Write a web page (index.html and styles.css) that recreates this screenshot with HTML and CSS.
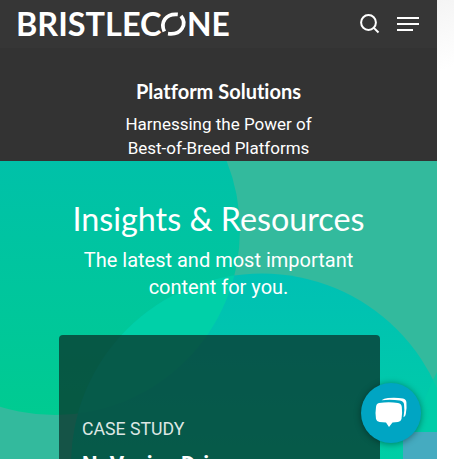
FILE: index.html
```
<!DOCTYPE html>
<html lang="en">
<head>
<meta charset="utf-8">
<title>Bristlecone</title>
<link rel="stylesheet" href="styles.css">
</head>
<body>
<div class="page">
  <header class="header">
    <svg class="logo" width="216" height="28" viewBox="0 0 216 28" role="img" aria-label="Bristlecone">
      <g class="logo-text">
        <text x="0" y="25.500" textLength="145.500" lengthAdjust="spacingAndGlyphs">BRISTLEC</text>
        <text x="171" y="25.500" textLength="42.800" lengthAdjust="spacingAndGlyphs">NE</text>
      </g>
      <g fill="none" stroke="#fff" stroke-width="3.700">
        <path d="M148.300 21.500C144.300 12.500 149.500 3.200 161.800 4.400"/>
        <path d="M165 6C171.500 14 165.500 25.500 152 23.700"/>
      </g>
    </svg>
    <div class="actions">
      <svg width="20" height="20" viewBox="0 0 20 20" fill="none" stroke="#fff" stroke-width="2"><circle cx="8.500" cy="8.500" r="7.400"/><path d="M13.600 13.600L18.500 18.500"/></svg>
      <svg width="22" height="16" viewBox="0 0 22 16" fill="#fff"><path d="M0 1h22v2H0zM0 7h22v2H0zM0 13h16v2H0z"/></svg>
    </div>
  </header>
  <section class="platform">
    <h2>Platform Solutions</h2>
    <p>Harnessing the Power of<br>Best-of-Breed Platforms</p>
  </section>
  <section class="insights">
    <svg class="backdrop" width="437" height="298" viewBox="0 161 437 298" aria-hidden="true">
      <defs>
        <linearGradient id="a" gradientUnits="userSpaceOnUse" x1="0" y1="161" x2="0" y2="415"><stop stop-color="#00c1a9"/><stop offset="1" stop-color="#00cb91"/></linearGradient>
        <linearGradient id="b" gradientUnits="userSpaceOnUse" x1="0" y1="273" x2="0" y2="459"><stop stop-color="#00c0b4"/><stop offset="1" stop-color="#00cea5"/></linearGradient>
        <clipPath id="c"><circle cx="55" cy="230" r="185"/></clipPath>
      </defs>
      <circle cx="55" cy="230" r="185" fill="url(#a)"/>
      <circle cx="262" cy="464.500" r="191" fill="url(#b)"/>
      <circle cx="262" cy="464.500" r="191" fill="#00d0a8" clip-path="url(#c)"/>
      <circle cx="602" cy="460" r="187" fill="#00cda8" fill-opacity=".7"/>
      <path d="M403 432h34v27h-34z" fill="#45abc0"/>
    </svg>
    <h1>Insights &amp; Resources</h1>
    <p>The latest and most important<br>content for you.</p>
    <article class="card">
      <span>CASE STUDY</span>
      <h3>NuVasive Drives</h3>
    </article>
  </section>
</div>
<div class="gutter"></div>
<button class="chat" aria-label="Chat">
  <svg width="34" height="32" viewBox="0 0 34 32" fill="#fff"><path d="M5 6Q15 4.500 24 6Q27.500 6.500 27.800 10Q28.600 16 27.500 22Q27 24.500 24 25L18.500 25.600L15 30L12 25.600L5.500 25Q2.500 24.500 2 22Q1 16 2 10Q2.300 6.500 5 6Z"/><path d="M7.500 3.200Q10 1.200 14 1Q22 .4 29 1.400Q32 2 32.400 5Q33 11 31.800 17Q31.500 19.500 29.500 20.300Q31 13 30 7Q29.500 4 26 3.500Q17 2.200 7.500 3.200Z"/></svg>
</button>
</body>
</html>
```
FILE: styles.css
```
* { box-sizing: border-box; }
body {
  margin: 0;
  height: 459px;
  display: flex;
  overflow: hidden;
  background: #fff;
  color: #fff;
  font-family: Roboto, sans-serif;
}
h1, h2, h3, p { margin: 0; }
svg { display: block; }
.page { width: 437px; height: 459px; overflow: hidden; }
.gutter {
  flex: 1;
  height: 90px;
  background: linear-gradient(155deg, #f4f4f4, #fff 75%);
}
.header {
  height: 48px;
  padding: 0 18px 0 16px;
  display: flex;
  align-items: center;
  justify-content: space-between;
  background: #363636;
}
.logo { overflow: visible; }
.logo-text { font: 700 32px Lato, sans-serif; fill: #fff; }
.actions { display: flex; align-items: center; gap: 17px; }
.platform {
  height: 113px;
  padding-top: 30px;
  background: #333;
  text-align: center;
}
.platform h2 {
  font: 700 20px/26px Lato, sans-serif;
  font-variant-ligatures: none;
}
.platform p { margin-top: 8px; font-size: 17px; line-height: 24px; }
.insights {
  position: relative;
  height: 298px;
  padding-top: 37px;
  overflow: hidden;
  background: #33ba9d;
  text-align: center;
}
.backdrop { position: absolute; inset: 0; }
.insights h1, .insights p, .card { position: relative; }
.insights h1 { font: 400 32.3px/42px Lato, sans-serif; }
.insights p { margin-top: 7px; font-size: 20px; line-height: 27px; }
.card {
  width: 321px;
  height: 180px;
  margin: 34px 0 0 59px;
  padding: 84px 23px 0;
  border-radius: 4px;
  background: rgba(8, 37, 32, .69);
  text-align: left;
}
.card span { display: block; font-size: 17.7px; line-height: 20px; color: #dde7e4; }
.card h3 { margin-top: 12px; font-size: 22px; line-height: 28px; font-weight: 700; }
.chat {
  position: absolute;
  left: 361px;
  top: 383px;
  width: 60px;
  height: 60px;
  padding: 0;
  display: grid;
  place-items: center;
  border: 0;
  border-radius: 50%;
  background: #00a5c3;
  box-shadow: 0 1px 7px rgba(0, 0, 0, .4);
}
```
